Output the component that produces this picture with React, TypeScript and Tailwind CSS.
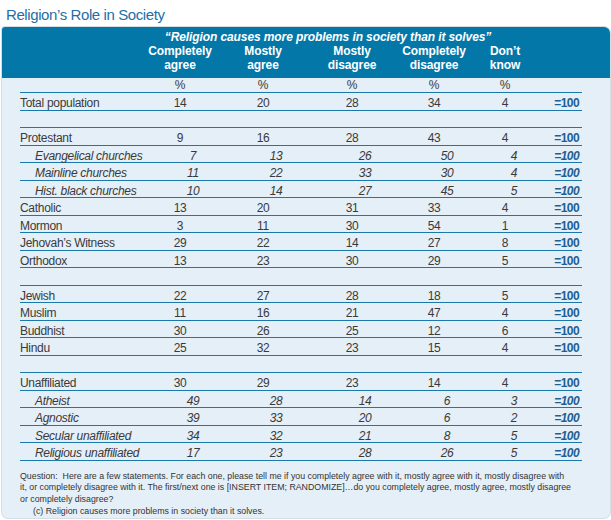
import React from "react";

type Row = { label: string; v: number[]; sub?: boolean } | null;

const rows: Row[] = [
  { label: "Total population", v: [14, 20, 28, 34, 4] },
  null,
  { label: "Protestant", v: [9, 16, 28, 43, 4] },
  { label: "Evangelical churches", v: [7, 13, 26, 50, 4], sub: true },
  { label: "Mainline churches", v: [11, 22, 33, 30, 4], sub: true },
  { label: "Hist. black churches", v: [10, 14, 27, 45, 5], sub: true },
  { label: "Catholic", v: [13, 20, 31, 33, 4] },
  { label: "Mormon", v: [3, 11, 30, 54, 1] },
  { label: "Jehovah\u2019s Witness", v: [29, 22, 14, 27, 8] },
  { label: "Orthodox", v: [13, 23, 30, 29, 5] },
  null,
  { label: "Jewish", v: [22, 27, 28, 18, 5] },
  { label: "Muslim", v: [11, 16, 21, 47, 4] },
  { label: "Buddhist", v: [30, 26, 25, 12, 6] },
  { label: "Hindu", v: [25, 32, 23, 15, 4] },
  null,
  { label: "Unaffiliated", v: [30, 29, 23, 14, 4] },
  { label: "Atheist", v: [49, 28, 14, 6, 3], sub: true },
  { label: "Agnostic", v: [39, 33, 20, 6, 2], sub: true },
  { label: "Secular unaffiliated", v: [34, 32, 21, 8, 5], sub: true },
  { label: "Religious unaffiliated", v: [17, 23, 28, 26, 5], sub: true },
];

const heads = [
  ["Completely", "agree"],
  ["Mostly", "agree"],
  ["Mostly", "disagree"],
  ["Completely", "disagree"],
  ["Don\u2019t", "know"],
];

const cols = "grid grid-cols-[124px_72px_94px_84px_80px_62px_46px]";

export default function App() {
  return (
    <div className="h-[520px] w-[611px] bg-white font-['Liberation_Sans',Arial,sans-serif] text-[#3a3a3a]">
      <div className="h-[27px] pl-[6px] pt-[4px] text-[15px] leading-normal tracking-[-0.4px] text-[#1f6fa6]">
        Religion’s Role in Society
      </div>

      <div className="ml-[2px] w-[608px] overflow-hidden rounded-[6px] rounded-tl-[3px] bg-[#e5eff7] pb-[1px] shadow-[0_0_0_1px_#d6dee4]">
        {/* Header */}
        <div className="bg-[#0477a9] pb-[6px] pl-[18px] pt-[3px] text-[12px] font-bold leading-[14px] text-white">
          <div className={cols}>
            <div className="col-span-5 col-start-2 pr-[24px] text-center italic tracking-[-0.1px]">
              “Religion causes more problems in society than it solves”
            </div>
            {heads.map((h, i) => (
              <div key={i} className={`text-center tracking-[-0.1px] ${i === 0 ? "col-start-2" : ""}`}>
                {h[0]}
                <br />
                {h[1]}
              </div>
            ))}
          </div>
        </div>

        {/* Body */}
        <div className="ml-[18px] w-[562px] text-[12px] tracking-[-0.3px]">
          <div className={`${cols} h-[15px] border-b border-[#1a78ad] leading-[15px]`}>
            <div />
            {heads.map((_, i) => (
              <div key={i} className="text-center">
                %
              </div>
            ))}
          </div>
          {rows.map((r, i) =>
            r === null ? (
              <div key={i} className="h-[17.5px] border-b border-[#1a78ad]" />
            ) : (
              <div
                key={i}
                className={`${cols} h-[17.5px] border-b border-[#1a78ad] pt-[3px] leading-[14.5px] ${r.sub ? "italic" : ""}`}
              >
                <div className={`whitespace-nowrap ${r.sub ? "pl-[15px]" : ""}`}>{r.label}</div>
                {r.v.map((n, j) => (
                  <div
                    key={j}
                    className={`text-center ${r.sub ? (j === 4 ? "pl-[18px]" : "pl-[26px]") : ""}`}
                  >
                    {n}
                  </div>
                ))}
                <div className="pr-[3px] text-right font-bold tracking-[-0.6px] text-[#1d5f93]">=100</div>
              </div>
            )
          )}
        </div>

        {/* Footnote */}
        <div className="ml-[18px] mt-[10px] whitespace-pre text-[8.8px] leading-[11.7px] text-[#333]">
          {"Question:  Here are a few statements. For each one, please tell me if you completely agree with it, mostly agree with it, mostly disagree with"}
          <br />
          {"it, or completely disagree with it. The first/next one is [INSERT ITEM; RANDOMIZE]\u2026do you completely agree, mostly agree, mostly disagree"}
          <br />
          {"or completely disagree?"}
          <br />
          <span className="pl-[13px]">(c) Religion causes more problems in society than it solves.</span>
        </div>
      </div>
    </div>
  );
}
